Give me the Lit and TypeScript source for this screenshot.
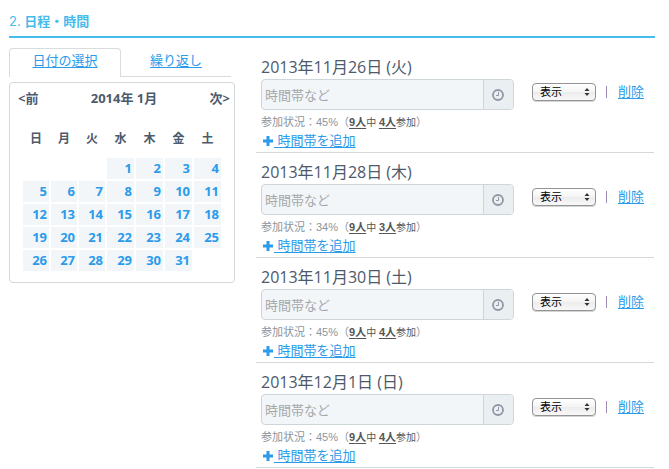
import { LitElement, html, css, nothing } from "lit";
import { customElement, property } from "lit/decorators.js";

const linkStyles = css`
  a {
    color: #2b9bea;
    text-decoration: underline;
    text-underline-offset: 2px;
  }
`;

@customElement("month-calendar")
class MonthCalendar extends LitElement {
  static styles = [
    linkStyles,
    css`
      :host {
        display: block;
        font-family: "Open Sans", "Noto Sans CJK JP", sans-serif;
      }
      .tabs {
        display: flex;
        margin-right: 4px;
        font-size: 13px;
        line-height: 24px;
        text-align: center;
      }
      .tab {
        box-sizing: border-box;
        height: 29px;
        flex: 1;
        border-bottom: 1px solid #d8dcdc;
      }
      .tab.active {
        border: 1px solid #d8dcdc;
        border-bottom: 0;
        border-radius: 4px 4px 0 0;
        line-height: 22px;
      }
      .panel {
        margin-top: 5px;
        border: 1px solid #d3d8d9;
        border-radius: 4px;
        padding: 4px 4px 9px 8px;
        color: #4c5a6c;
        font-weight: 700;
      }
      .nav {
        display: flex;
        justify-content: space-between;
        align-items: center;
        height: 22px;
        font-size: 13px;
        line-height: 20px;
      }
      .nav button {
        border: 0;
        padding: 0;
        background: none;
        font: inherit;
        color: inherit;
      }
      table {
        table-layout: fixed;
        width: 202px;
        margin: 16px auto 0 3px;
        border-collapse: separate;
        border-spacing: 2px;
        font-size: 13px;
      }
      th,
      td {
        box-sizing: border-box;
        padding: 0;
        height: 21px;
        line-height: 21px;
      }
      th {
        width: 27px;
        height: 29px;
        padding-bottom: 7px;
        font-size: 12px;
        font-weight: 600;
      }
      th:nth-child(-n + 3) {
        width: 26px;
      }
      td {
        padding-right: 2px;
        text-align: right;
      }
      .day {
        background: #f2f6f9;
      }
      .day a {
        display: block;
        font-weight: 700;
        text-decoration: none;
      }
    `,
  ];

  private weeks(): number[][] {
    const lead = new Date(2014, 0, 1).getDay();
    return Array.from({ length: 5 }, (_, w) =>
      Array.from({ length: 7 }, (_, d) => w * 7 + d - lead + 1)
    );
  }

  render() {
    return html`
      <nav class="tabs">
        <div class="tab active"><a href="#date">日付の選択</a></div>
        <div class="tab"><a href="#repeat">繰り返し</a></div>
      </nav>
      <div class="panel">
        <div class="nav">
          <button type="button">&lt;前</button>
          <span>2014年 1月</span>
          <button type="button">次&gt;</button>
        </div>
        <table>
          <thead>
            <tr>
              ${[..."日月火水木金土"].map((d) => html`<th scope="col">${d}</th>`)}
            </tr>
          </thead>
          <tbody>
            ${this.weeks().map(
              (week) => html`<tr>
                ${week.map((d) =>
                  d > 0 && d <= 31
                    ? html`<td class="day"><a href="#d${d}">${d}</a></td>`
                    : html`<td>${nothing}</td>`
                )}
              </tr>`
            )}
          </tbody>
        </table>
      </div>
    `;
  }
}

@customElement("schedule-item")
class ScheduleItem extends LitElement {
  @property() date = "";
  @property({ type: Number }) rate = 0;
  @property({ type: Number }) total = 0;
  @property({ type: Number }) joined = 0;

  static styles = [
    linkStyles,
    css`
      :host {
        display: block;
        box-sizing: border-box;
        height: 105px;
        padding: 8px 10px 0 5px;
        border-bottom: 1px solid #d3d8d9;
      }
      h3 {
        margin: 0;
        font-family: "Open Sans", "Noto Sans CJK JP", sans-serif;
        font-size: 16px;
        line-height: 23px;
        font-weight: 400;
        color: #4c5a6c;
      }
      .row {
        display: flex;
        align-items: center;
      }
      .field {
        flex: 1;
        min-width: 0;
        display: flex;
        box-sizing: border-box;
        height: 31px;
        margin-right: 18px;
        border: 1px solid #cfd6d9;
        border-radius: 4px;
        background: #f2f6f9;
        overflow: hidden;
      }
      input {
        flex: 1;
        min-width: 0;
        border: 0;
        padding: 2px 3px 0;
        background: none;
        font: inherit;
        font-size: 13px;
        outline: none;
      }
      input::placeholder {
        color: #a5a8aa;
        opacity: 1;
      }
      .clock {
        display: flex;
        align-items: center;
        justify-content: center;
        width: 30px;
        border: 0;
        border-left: 1px solid #cfd6d9;
        padding: 0;
        background: #eaeff2;
      }
      .actions {
        display: flex;
        align-items: center;
        padding-bottom: 6px;
      }
      .select {
        display: grid;
        align-items: center;
        width: 64px;
        height: 18px;
      }
      .select > * {
        grid-area: 1 / 1;
      }
      select {
        appearance: none;
        width: 64px;
        height: 18px;
        border: 1px solid #939393;
        border-radius: 4px;
        padding: 0 7px;
        background: linear-gradient(#ffffff, #f4f4f4 50%, #ececec 51%, #f8f8f8);
        box-shadow: 0 1px 0 #d5d5d5;
        font: inherit;
        font-size: 11px;
        line-height: 16px;
        color: #000;
      }
      .arrows {
        justify-self: end;
        margin-right: 6px;
        pointer-events: none;
      }
      .bar {
        width: 1px;
        height: 12px;
        margin: 0 11px 0 10px;
        background: #a08bb5;
      }
      .delete {
        font-size: 13px;
        line-height: 20px;
      }
      .status {
        margin: 3px 0 0;
        font-size: 11px;
        line-height: 18px;
        color: #8d959c;
      }
      .status span {
        font-size: 10px;
        color: #555;
      }
      .status b {
        font-size: 11px;
        font-weight: 700;
        text-decoration: underline;
        text-underline-offset: 2px;
      }
      .add {
        display: flex;
        align-items: center;
        width: max-content;
        font-size: 13px;
        line-height: 18px;
        text-decoration: none;
      }
      .add svg {
        margin: 0 1px 0 2px;
      }
      .add span {
        white-space: pre;
        text-decoration: underline;
        text-underline-offset: 2px;
      }
    `,
  ];

  render() {
    return html`
      <h3>${this.date}</h3>
      <div class="row">
        <div class="field">
          <input type="text" placeholder="時間帯など" aria-label="時間帯" />
          <button class="clock" type="button" aria-label="時刻">
            <svg width="12" height="12" viewBox="0 0 12 12" fill="none" stroke="#9098a6">
              <circle cx="6" cy="6" r="5" stroke-width="1.8" />
              <path d="M6.5 3v3.5H4" stroke-width="1" />
            </svg>
          </button>
        </div>
        <div class="actions">
          <div class="select">
            <select aria-label="表示設定">
              <option>表示</option>
            </select>
            <svg class="arrows" width="6" height="8" viewBox="0 0 6 8" fill="#333">
              <path d="M3 0l2.5 3h-5zM3 8l2.5-3h-5z" />
            </svg>
          </div>
          <span class="bar"></span>
          <a class="delete" href="#delete">削除</a>
        </div>
      </div>
      <p class="status">参加状況：${this.rate}%（<span><b>${this.total}人</b>中 <b>${this.joined}人</b>参加</span>）</p>
      <a class="add" href="#add"
        ><svg width="10" height="10" viewBox="0 0 10 10" fill="#2b9bea">
          <path d="M3.5 0h3v3.5H10v3H6.5V10h-3V6.5H0v-3h3.5z" /></svg
        ><span> 時間帯を追加</span></a
      >
    `;
  }
}

const items = [
  { date: "2013年11月26日 (火)", rate: 45, total: 9, joined: 4 },
  { date: "2013年11月28日 (木)", rate: 34, total: 9, joined: 3 },
  { date: "2013年11月30日 (土)", rate: 45, total: 9, joined: 4 },
  { date: "2013年12月1日 (日)", rate: 45, total: 9, joined: 4 },
];

@customElement("app-root")
class AppRoot extends LitElement {
  static styles = css`
    :host {
      display: block;
      padding: 8px 14px 0 9px;
      background: #fff;
      font-family: "Liberation Sans", "Noto Sans CJK JP", sans-serif;
    }
    h2 {
      margin: 0;
      height: 28px;
      border-bottom: 2px solid #45bcec;
      color: #45bcec;
      font-family: Inter, "Noto Sans CJK JP", sans-serif;
      font-size: 13px;
      line-height: 26px;
      font-weight: 400;
    }
    h2 b {
      font-weight: 600;
    }
    .columns {
      display: grid;
      grid-template-columns: 226px 1fr;
      column-gap: 21px;
      padding: 10px 1px 0 0;
    }
  `;

  render() {
    return html`
      <h2>2. <b>日程・時間</b></h2>
      <div class="columns">
        <month-calendar></month-calendar>
        <div class="list">
          ${items.map(
            (i) => html`<schedule-item
              .date=${i.date}
              .rate=${i.rate}
              .total=${i.total}
              .joined=${i.joined}
            ></schedule-item>`
          )}
        </div>
      </div>
    `;
  }
}
